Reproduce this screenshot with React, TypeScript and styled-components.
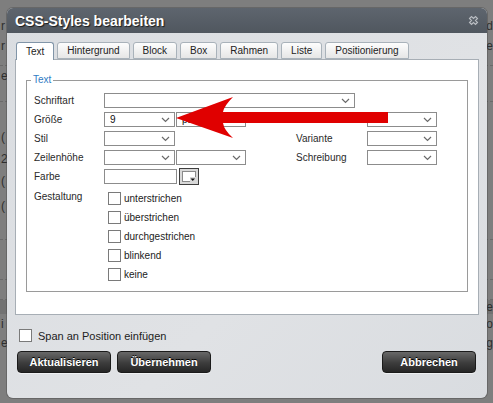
import styled, { createGlobalStyle } from 'styled-components'

const GlobalStyle = createGlobalStyle`
  html, body {
    margin: 0;
    padding: 0;
  }
  body {
    background: #7e7e7e;
    font-family: 'Liberation Sans', Arial, sans-serif;
  }
`

const Screen = styled.div`
  position: relative;
  width: 493px;
  height: 403px;
  overflow: hidden;
  background: #7e7e7e;
`

// page behind the modal, only its edges show
const Backdrop = styled.div`
  display: flex;
  flex-direction: column;
  color: #2e2e2e;
  font-size: 12px;
`

const BgRow = styled.div<{ $h: number; $band?: boolean; $dashed?: boolean }>`
  display: flex;
  justify-content: space-between;
  align-items: center;
  height: ${(p) => p.$h}px;
  background: ${(p) => (p.$band ? '#727272' : 'transparent')};
  border-bottom: ${(p) => (p.$dashed ? '1px dashed #6a6a6a' : 'none')};
  box-sizing: border-box;
  padding: 0 0 0 1px;
`

const Dialog = styled.div`
  position: absolute;
  left: 7px;
  top: 8px;
  width: 480px;
  height: 390px;
  border-radius: 6px;
  overflow: hidden;
  background: linear-gradient(135deg, #dadde1, #e0e2e5 60%, #d9dce0);
  box-shadow: 0 0 0 1px rgba(60, 60, 60, 0.35);
  display: flex;
  flex-direction: column;
`

const TitleBar = styled.div`
  height: 25px;
  flex: none;
  display: flex;
  align-items: center;
  justify-content: space-between;
  padding: 0 8px 0 8px;
  background: linear-gradient(#5e656e, #50575f);
`

const Title = styled.div`
  color: #fff;
  font-size: 14px;
  font-weight: bold;
  text-shadow: 1px 1px 1px #1c1c1c;
`

const Body = styled.div`
  flex: 1;
  padding: 9px 8px 0 8px;
  display: flex;
  flex-direction: column;
`

const Tabs = styled.div`
  display: flex;
  gap: 3px;
  margin-left: 1px;
  position: relative;
  z-index: 1;
`

const Tab = styled.div<{ $active?: boolean }>`
  box-sizing: border-box;
  padding: 0 9px;
  display: flex;
  align-items: center;
  font-size: 10px;
  color: #222;
  border: 1px solid ${(p) => (p.$active ? '#8195a8' : '#a9b2ba')};
  border-bottom: ${(p) => (p.$active ? 'none' : '1px solid #a9b2ba')};
  border-radius: 3px 3px 0 0;
  background: ${(p) => (p.$active ? '#fff' : 'linear-gradient(#fdfdfd, #e6e6e6)')};
  margin-bottom: ${(p) => (p.$active ? '-1px' : '0')};
  height: ${(p) => (p.$active ? '18px' : '17px')};
`

const Panel = styled.div`
  height: 256px;
  box-sizing: border-box;
  background: #fff;
  border: 1px solid #a7aeb5;
  padding: 14px 10px 0 10px;
`

const Fieldset = styled.fieldset`
  margin: 0;
  height: 218px;
  box-sizing: border-box;
  border: 1px solid #9a9a9a;
  padding: 5px 0 0 7px;
`

const Legend = styled.legend`
  font-size: 10px;
  line-height: 12px;
  color: #2f7cc4;
  padding: 0 2px;
  margin-left: -3px;
`

const Row = styled.div`
  display: grid;
  grid-template-columns: 70px 72px 70px 50px 71px 70px;
  align-items: center;
  height: 19px;
`

const Label = styled.div`
  font-size: 10px;
  color: #2a2a2a;
`

const SelectBox = styled.div<{ $w: number; $wide?: boolean }>`
  width: ${(p) => p.$w}px;
  height: 15px;
  box-sizing: border-box;
  border: 1px solid #8c8c8c;
  background: #fff;
  display: flex;
  align-items: center;
  justify-content: space-between;
  padding: 0 4px 0 5px;
  font-size: 10px;
  color: #111;
  grid-column: ${(p) => (p.$wide ? '2 / span 5' : 'auto')};
`

const Chevron = () => (
  <svg width="9" height="6" viewBox="0 0 9 6">
    <path d="M1 1 L4.5 4.5 L8 1" fill="none" stroke="#6a6a6a" strokeWidth="1.2" />
  </svg>
)

function Select({ w, value, wide }: { w: number; value?: string; wide?: boolean }) {
  return (
    <SelectBox $w={w} $wide={wide}>
      <span>{value}</span>
      <Chevron />
    </SelectBox>
  )
}

const ColorField = styled.div`
  grid-column: 2 / span 2;
  display: flex;
  align-items: center;
  gap: 2px;
`

const TextInput = styled.div`
  width: 73px;
  height: 15px;
  box-sizing: border-box;
  border: 1px solid #8c8c8c;
  background: #fff;
`

const ColorButton = styled.div`
  width: 20px;
  height: 17px;
  box-sizing: border-box;
  border: 1px solid #3e3e3e;
  background: #d8d8d8;
  padding: 2px;
  display: flex;
`

const Swatch = () => (
  <svg width="14" height="11" viewBox="0 0 14 11">
    <rect x="0.5" y="0.5" width="13" height="10" fill="#fff" stroke="#8a8a8a" />
    <rect x="8" y="6" width="6" height="5" fill="#d8d8d8" />
    <path d="M8.5 7.5 L13 7.5 L10.75 10 Z" fill="#111" />
  </svg>
)

const StyleRow = styled.div`
  display: grid;
  grid-template-columns: 70px 1fr;
  align-items: start;
`

const StyleLabel = styled(Label)`
  margin-top: 5px;
`

const CheckList = styled.div`
  display: flex;
  flex-direction: column;
  padding-top: 3px;
`

const CheckItem = styled.div`
  display: flex;
  align-items: center;
  height: 19px;
  font-size: 10px;
  color: #222;
`

const Box = styled.span<{ $ml: number }>`
  width: 13px;
  height: 13px;
  box-sizing: border-box;
  border: 1px solid #7a7a7a;
  background: #fff;
  margin: 0 3px 0 ${(p) => p.$ml}px;
  flex: none;
`

const SpanRow = styled.div`
  display: flex;
  align-items: center;
  margin-top: 14px;
  font-size: 11px;
  color: #222;
  height: 13px;
`

const SpanBox = styled(Box)`
  margin-right: 6px;
`

const Buttons = styled.div`
  display: flex;
  gap: 6px;
  margin: 9px 3px 0 2px;
`

const Button = styled.div<{ $right?: boolean }>`
  width: 94px;
  height: 22px;
  box-sizing: border-box;
  margin-left: ${(p) => (p.$right ? 'auto' : '0')};
  border: 1px solid #1b1b1b;
  border-radius: 4px;
  background: linear-gradient(#686868, #3c3c3c 55%, #262626);
  box-shadow: 0 1px 0 rgba(255, 255, 255, 0.5);
  color: #fff;
  font-size: 11px;
  font-weight: bold;
  text-shadow: 0 -1px 0 #000;
  display: flex;
  align-items: center;
  justify-content: center;
`

const Overlay = styled.svg`
  position: absolute;
  left: 0;
  top: 0;
  pointer-events: none;
`

const CloseIcon = () => (
  <svg width="11" height="11" viewBox="0 0 11 11">
    <path
      d="M1.5 3.5 L3.5 1.5 L5.5 3.5 L7.5 1.5 L9.5 3.5 L7.5 5.5 L9.5 7.5 L7.5 9.5 L5.5 7.5 L3.5 9.5 L1.5 7.5 L3.5 5.5 Z"
      fill="#5c636b"
      stroke="#b9bdc2"
      strokeWidth="1.1"
    />
  </svg>
)

const bgRows = [
  { h: 16 },
  { h: 20, l: 'r', r: 'd' },
  { h: 20, l: 'r', r: 'e' },
  { h: 10, dashed: true },
  { h: 20, l: 'e' },
  { h: 16, dashed: true },
  { h: 24 },
  { h: 22, l: '(' },
  { h: 22, l: '2' },
  { h: 22, l: '(' },
  { h: 28, l: '(' },
  { h: 20, dashed: true },
  { h: 40, dashed: true },
  { h: 20, dashed: true },
  { h: 14, band: true, r: 'e' },
  { h: 20, l: 'i', r: 'o' },
  { h: 18, l: 'e', r: 'g' },
]

const options = ['unterstrichen', 'überstrichen', 'durchgestrichen', 'blinkend', 'keine']

export default function App() {
  return (
    <Screen>
      <GlobalStyle />
      <Backdrop>
        {bgRows.map((row, i) => (
          <BgRow key={i} $h={row.h} $band={row.band} $dashed={row.dashed}>
            <span>{row.l}</span>
            <span>{row.r}</span>
          </BgRow>
        ))}
      </Backdrop>

      <Dialog>
        <TitleBar>
          <Title>CSS-Styles bearbeiten</Title>
          <CloseIcon />
        </TitleBar>
        <Body>
          <Tabs>
            <Tab $active>Text</Tab>
            <Tab>Hintergrund</Tab>
            <Tab>Block</Tab>
            <Tab>Box</Tab>
            <Tab>Rahmen</Tab>
            <Tab>Liste</Tab>
            <Tab>Positionierung</Tab>
          </Tabs>
          <Panel>
            <Fieldset>
              <Legend>Text</Legend>
              <Row>
                <Label>Schriftart</Label>
                <Select w={251} wide />
              </Row>
              <Row>
                <Label>Größe</Label>
                <Select w={71} value="9" />
                <Select w={70} value="pt" />
                <span />
                <Label>Stärke</Label>
                <Select w={70} />
              </Row>
              <Row>
                <Label>Stil</Label>
                <Select w={71} />
                <span />
                <span />
                <Label>Variante</Label>
                <Select w={70} />
              </Row>
              <Row>
                <Label>Zeilenhöhe</Label>
                <Select w={71} />
                <Select w={70} />
                <span />
                <Label>Schreibung</Label>
                <Select w={70} />
              </Row>
              <Row>
                <Label>Farbe</Label>
                <ColorField>
                  <TextInput />
                  <ColorButton>
                    <Swatch />
                  </ColorButton>
                </ColorField>
              </Row>
              <StyleRow>
                <StyleLabel>Gestaltung</StyleLabel>
                <CheckList>
                  {options.map((o) => (
                    <CheckItem key={o}>
                      <Box $ml={4} />
                      {o}
                    </CheckItem>
                  ))}
                </CheckList>
              </StyleRow>
            </Fieldset>
          </Panel>
          <SpanRow>
            <SpanBox $ml={4} />
            Span an Position einfügen
          </SpanRow>
          <Buttons>
            <Button>Aktualisieren</Button>
            <Button>Übernehmen</Button>
            <Button $right>Abbrechen</Button>
          </Buttons>
        </Body>
      </Dialog>

      <Overlay width="493" height="403" viewBox="0 0 493 403">
        <path
          d="M176 118 L233 97 Q224 106 223 112 L388 112 L388 123 L223 123 Q224 130 233 138 Z"
          fill="#e00000"
        />
      </Overlay>
    </Screen>
  )
}
